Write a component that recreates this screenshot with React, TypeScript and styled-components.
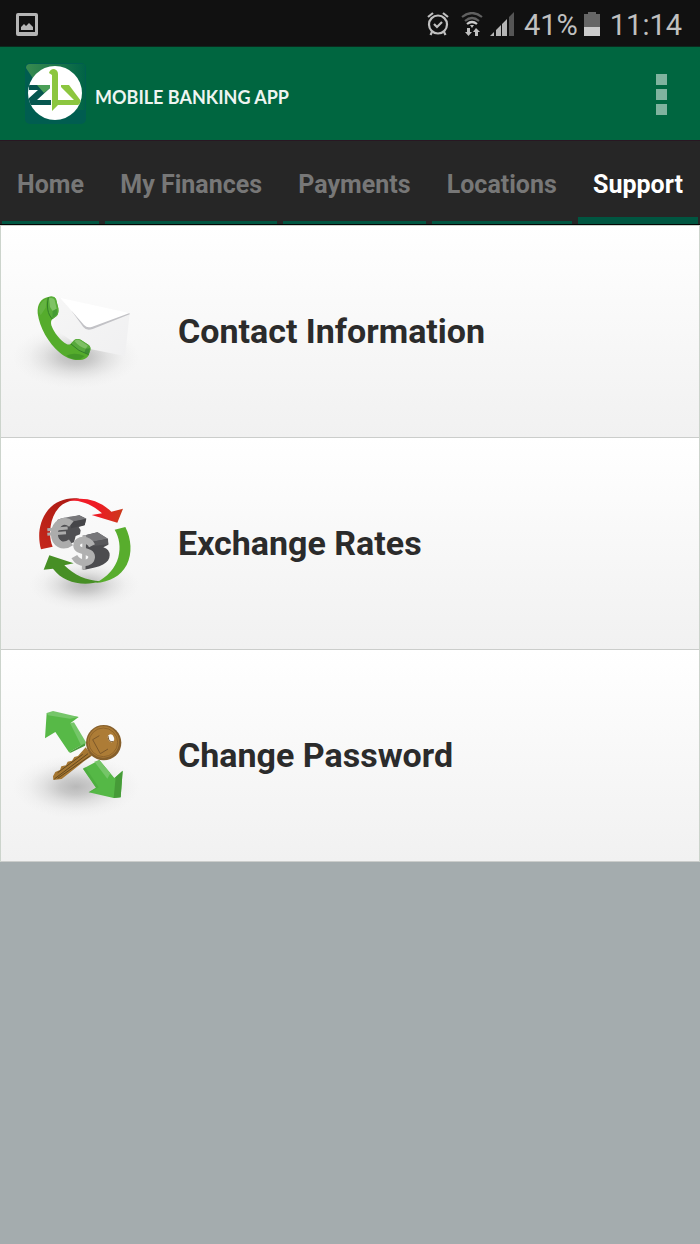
import React from 'react';
import styled, { createGlobalStyle } from 'styled-components';

const GlobalStyle = createGlobalStyle`
  * { box-sizing: border-box; }
  body {
    margin: 0;
    background: #a4acae;
    font-family: Roboto, "Liberation Sans", sans-serif;
  }
`;

const StatusBar = styled.div`
  display: flex;
  align-items: center;
  justify-content: space-between;
  height: 47px;
  padding: 2px 18px 0 16px;
  background: #111;
  border-bottom: 1px solid #0b2a1e;
  color: #c0c0c0;
`;

const StatusGroup = styled.div`
  display: flex;
  align-items: center;
  gap: 6px;
`;

const StatusText = styled.span`
  padding: 2px 0 0 4px;
  font-size: 29px;
  line-height: 42px;
`;

const StatusIcon = styled.svg`
  display: block;
  flex: none;
`;

const AppBar = styled.header`
  display: flex;
  align-items: center;
  justify-content: space-between;
  height: 93px;
  padding: 0 24px;
  background: #006640;
`;

const Brand = styled.div`
  display: flex;
  align-items: center;
  gap: 8px;
`;

const Title = styled.h1`
  margin: 0;
  padding-top: 6px;
  color: #eef5f1;
  font: 700 18px/28px Lato, "Open Sans", sans-serif;
`;

const MenuButton = styled.button`
  display: flex;
  flex-direction: column;
  align-items: center;
  gap: 4px;
  width: 30px;
  padding: 2px 0 0;
  border: 0;
  background: none;
`;

const MenuDot = styled.span`
  width: 11px;
  height: 11px;
  background: #80b39f;
`;

const Tabs = styled.nav`
  display: flex;
  gap: 6px;
  height: 85px;
  padding: 0 2px;
  background: #262626;
  border-top: 1px solid #281722;
  border-bottom: 1px solid #050505;
`;

const Tab = styled.a<{ $active?: boolean }>`
  flex: 1 0 auto;
  height: 83px;
  text-align: center;
  text-decoration: none;
  font-size: 25px;
  font-weight: 700;
  line-height: 88px;
  color: ${(p) => (p.$active ? '#fff' : '#777')};
  box-shadow: inset 0 ${(p) => (p.$active ? '-7px' : '-3px')} 0 #005641;
`;

const List = styled.main`
  border: 1px solid #ccd4cc;
  border-bottom: 0;
`;

const Row = styled.a`
  display: flex;
  align-items: center;
  gap: 24px;
  height: 212px;
  padding-left: 13px;
  border-bottom: 1px solid #cbcdcb;
  background: linear-gradient(#fff, #f1f1f1);
  color: #2b2b2b;
  text-decoration: none;
`;

const RowLabel = styled.span`
  padding-bottom: 2px;
  font-size: 34px;
  font-weight: 700;
  line-height: 40px;
`;

const Art = styled.svg`
  display: block;
  flex: none;
  width: 140px;
  height: 140px;
`;

const Shadow = ({ id, cx, cy, rx = 190, ry = 95 }: { id: string; cx: number; cy: number; rx?: number; ry?: number }) => (
  <>
    <defs>
      <radialGradient id={id}>
        <stop offset="0" stopColor="#777" stopOpacity=".48" />
        <stop offset=".25" stopColor="#808080" stopOpacity=".38" />
        <stop offset=".5" stopColor="#888" stopOpacity=".19" />
        <stop offset=".75" stopColor="#999" stopOpacity=".06" />
        <stop offset="1" stopColor="#bbb" stopOpacity="0" />
      </radialGradient>
    </defs>
    <ellipse cx={cx} cy={cy} rx={rx} ry={ry} fill={`url(#${id})`} />
  </>
);

const ContactArt = () => (
  <Art viewBox="42 -27 420 420" aria-hidden="true">
    <defs>
      <linearGradient id="paper" x1="0" y1="0" x2="1" y2="1">
        <stop offset="0" stopColor="#f6f6f6" />
        <stop offset="1" stopColor="#f0f0f1" />
      </linearGradient>
    </defs>
    <Shadow id="contactShadow" cx={228} cy={257} />
    <path d="M178 80L389 127L375 255L240 228L160 170Z" fill="url(#paper)" />
    <path d="M215 120L250 168Q260 181 278 174L389 130L388 126Z" fill="#c2c2c6" />
    <path d="M180 80L252 162Q262 173 277 167L389 126Z" fill="#fff" />
    <path d="M145 78Q162 74 168 84L175 112Q177 129 169 136L157 145Q151 150 154 163C162 185 180 209 201 220Q207 222 212 218L223 207Q231 201 242 206L265 221Q273 227 271 237L266 253Q261 263 247 266C222 271 198 262 178 244C145 215 119 171 113 127C111 99 123 82 145 78Z" fill="#55ac2c" />
    <path d="M145 78Q162 74 168 84L175 112Q177 129 169 136L157 145Q143 129 142 103Q141 89 145 78Z" fill="#57ad38" />
    <path d="M147 82Q160 79 164 87L170 113L158 120L150 108Z" fill="#7fc365" />
    <path d="M158 120L170 113L172 129L157 142Z" fill="#459b33" />
    <path d="M213 218L223 207Q231 201 242 206L265 221Q273 227 271 237L266 251Q240 246 213 218Z" fill="#57a93c" />
    <path d="M223 210Q232 203 242 209L264 224L257 233Q238 228 223 210Z" fill="#7dbf64" />
    <path d="M257 233L270 232L266 250L253 245Z" fill="#3f8f33" />
    <path d="M145 79C139 107 143 130 157 144M213 219Q234 241 266 251" fill="none" stroke="#337f29" strokeWidth="3" />
    <path d="M117 113C119 100 128 88 140 84L137 110L122 133Q116 124 117 113Z" fill="#6db94e" opacity=".65" />
    <path d="M199 254Q222 242 254 255L242 264Q218 269 199 254Z" fill="#3c8e27" opacity=".65" />
  </Art>
);

const ExchangeArt = () => (
  <Art viewBox="42 -21 420 420" aria-hidden="true">
    <defs>
      <linearGradient id="redBand" x1="0" y1="1" x2="1" y2="0">
        <stop offset="0" stopColor="#c5281c" />
        <stop offset="1" stopColor="#a91812" />
      </linearGradient>
      <linearGradient id="redHead">
        <stop offset="0" stopColor="#f51b2b" />
        <stop offset=".55" stopColor="#ed1c24" />
        <stop offset="1" stopColor="#c93a1b" />
      </linearGradient>
    </defs>
    <Shadow id="rateShadow" cx={253} cy={312} rx={165} ry={76} />
    <path d="M123 205C112 166 117 121 144 87C168 59 202 48 239 53L208 61C176 70 157 101 152 135C148 160 151 180 158 197Z" fill="url(#redBand)" />
    <path d="M204 59C240 47 293 52 334 92L369 83L352 125L275 102L306 97C277 71 244 57 204 59Z" fill="url(#redHead)" />
    <path d="M344 146L376 138C394 174 398 217 380 252C361 286 330 303 286 306C322 289 346 262 355 229C363 198 358 170 344 146Z" fill="#58ad2d" />
    <path d="M148 223L221 247L193 253C223 282 258 299 302 301C251 317 191 306 159 263L131 266Z" fill="#478f25" />
    <path d="M172 118L238 103L259 113L254 133L236 138L242 148L240 160L227 165L222 184L196 193L172 170Z" fill="#505053" />
    <path d="M172 117Q180 111 238 103L259 113L215 124Z" fill="#77777a" />
    <path d="M213 122L258 114L254 132L213 142Z" fill="#464649" />
    <path d="M214 129C190 109 165 129 163 157C163 188 188 202 213 184" fill="none" stroke="#acacac" strokeWidth="21" />
    <path d="M142 146L203 141M142 160L198 155" fill="none" stroke="#acacac" strokeWidth="9" />
    <path d="M249 164L292 154L323 173L325 191L310 199Q329 205 329 223C329 246 303 259 249 267L256 245L276 225L249 195Z" fill="#4c4c4f" />
    <path d="M247 165L293 154L324 173L278 182Z" fill="#77777a" />
    <path d="M277 182L324 173L325 190L280 195Z" fill="#58585b" />
    <path d="M276 194C265 172 231 172 230 193C228 215 275 205 275 228C273 252 237 251 223 227" fill="none" stroke="#b0b0b0" strokeWidth="20" />
    <path d="M253 163L251 266" fill="none" stroke="#b0b0b0" strokeWidth="11" />
  </Art>
);

const PasswordArt = () => (
  <Art viewBox="42 -15 420 420" aria-hidden="true">
    <Shadow id="keyShadow" cx={228} cy={287} />
    <path d="M140 66L236 78L212 96L257 155L207 184L166 123L135 142Z" fill="#57b947" />
    <path d="M140 66L159 60L236 78L210 83L144 73Z" fill="#76c66a" />
    <path d="M210 96L222 94L258 154L244 164Z" fill="#75c669" />
    <path d="M207 184L257 155L255 164L212 185Z" fill="#479c3a" />
    <path d="M249 233L298 207L343 261L368 239L362 319L341 321L266 304L288 290Z" fill="#55b846" />
    <path d="M283 212L298 207L331 247L322 263Z" fill="#75c568" />
    <path d="M347 259L368 239L362 319L341 321Z" fill="#469b38" />
    <path d="M249 233L256 229L296 289L271 303L266 304L288 290Z" fill="#4aa93c" opacity=".7" />
    <path d="M257 169L276 194L252 211L185 264L160 267L159 256L166 243L180 237L184 226L198 223L203 212L216 209L223 198L234 195Z" fill="#a57631" />
    <path d="M163 264L264 188M173 262L271 194M173 245L248 190" fill="none" stroke="#63491f" strokeWidth="3" />
    <circle cx="311" cy="155" r="53" fill="#87602c" />
    <circle cx="310" cy="153" r="47" fill="#ad7c36" />
    <circle cx="310" cy="154" r="43" fill="none" stroke="#805724" strokeWidth="2" />
    <path d="M278 146L301 188L324 174M278 146L298 134" fill="none" stroke="#7d5829" strokeWidth="3" />
    <ellipse cx="333" cy="142" rx="9" ry="12" fill="#fafafa" transform="rotate(-20 333 142)" />
    <path d="M325 136C324 148 331 154 340 151" fill="none" stroke="#735126" strokeWidth="3" />
  </Art>
);

const Logo = () => (
  <svg width="63" height="63" viewBox="0 0 63 63" role="img" aria-label="ZB">
    <defs>
      <linearGradient id="logoLeaf">
        <stop offset="0" stopColor="#398b4f" />
        <stop offset="1" stopColor="#006346" />
      </linearGradient>
      <clipPath id="logoDisc"><circle cx="31" cy="31" r="27" /></clipPath>
    </defs>
    <rect x="1" y="1" width="61" height="61" rx="5" fill="#005d50" />
    <path d="M2 6Q2 2 6 2H61V48H30Z" fill="url(#logoLeaf)" />
    <circle cx="31" cy="31" r="27" fill="#fff" />
    <g clipPath="url(#logoDisc)">
      <path d="M5 23H26V26L13 38H27V43H3V38L14 28H5Z" fill="#07564f" />
      <path d="M13 23H26V26L20 31Z" fill="#4b9f58" />
      <path d="M25 11Q26 7 30 7Q34 8 34 12V38H50L37 25V23H45L57 39V41L54 43H34L28 49V13Z" fill="#8cc63f" />
    </g>
  </svg>
);

const tabs = ['Home', 'My Finances', 'Payments', 'Locations', 'Support'];

const rows = [
  { label: 'Contact Information', Picture: ContactArt },
  { label: 'Exchange Rates', Picture: ExchangeArt },
  { label: 'Change Password', Picture: PasswordArt },
];

export default function App() {
  return (
    <>
      <GlobalStyle />
      <StatusBar>
        <StatusIcon width="22" height="23" viewBox="0 0 22 23" aria-hidden="true">
          <path fillRule="evenodd" d="M2 0H20Q22 0 22 2V21Q22 23 20 23H2Q0 23 0 21V2Q0 0 2 0ZM3 3V19H19V3Z" fill="#b5b5b5" />
          <path d="M5 17V14L8 11L10 13L13 10L17 14V17Z" fill="#b5b5b5" />
        </StatusIcon>
        <StatusGroup>
          <StatusIcon width="22" height="24" viewBox="0 0 22 24" aria-hidden="true">
            <g fill="none" stroke="#c0c0c0" strokeWidth="2.2">
              <circle cx="11" cy="12.5" r="9" />
              <path d="M7 12L10 15L15 10M1 5L6 1M16 1L21 5M5 20L3.500 23M17 20L18.500 23" />
            </g>
          </StatusIcon>
          <StatusIcon width="29" height="25" viewBox="-7 0 29 25" aria-hidden="true">
            <path d="M0 5Q10 -3 20 5M3 9Q10 3 17 9" fill="none" stroke="#606060" strokeWidth="2.2" />
            <path d="M5 12Q10 8 15 12" fill="none" stroke="#ccc" strokeWidth="2.2" />
            <path d="M8 13H12L10 16ZM5 16H8V20H10L6.500 24L3 20H5ZM13 24V20H11L14 16L18 20H16V24Z" fill="#c0c0c0" />
          </StatusIcon>
          <StatusIcon width="24" height="24" viewBox="0 0 24 24" aria-hidden="true">
            <path d="M0 24L4 20V24ZM6 18L11 13V24H6ZM12 12L17 7V24H12Z" fill="#b5b5b5" />
            <path d="M19 5L24 0V24H19Z" fill="#555" />
          </StatusIcon>
          <StatusText>41%</StatusText>
          <StatusIcon width="16" height="24" viewBox="0 0 16 24" aria-hidden="true">
            <path d="M0 2H4V0H12V2H16V15H0Z" fill="#666" />
            <path d="M0 15H16V24H0Z" fill="#ccc" />
          </StatusIcon>
          <StatusText as="time">11:14</StatusText>
        </StatusGroup>
      </StatusBar>
      <AppBar>
        <Brand>
          <Logo />
          <Title>MOBILE BANKING APP</Title>
        </Brand>
        <MenuButton type="button" aria-label="More options">
          <MenuDot />
          <MenuDot />
          <MenuDot />
        </MenuButton>
      </AppBar>
      <Tabs>
        {tabs.map((name) => (
          <Tab key={name} href="#" $active={name === 'Support'} aria-current={name === 'Support' ? 'page' : undefined}>
            {name}
          </Tab>
        ))}
      </Tabs>
      <List>
        {rows.map(({ label, Picture }) => (
          <Row key={label} href="#">
            <Picture />
            <RowLabel>{label}</RowLabel>
          </Row>
        ))}
      </List>
    </>
  );
}
